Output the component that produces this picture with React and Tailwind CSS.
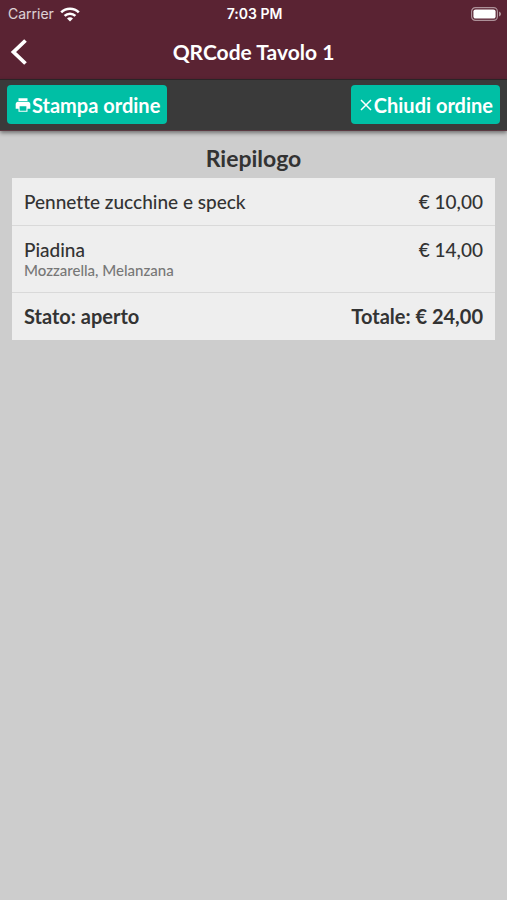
import { IoMdPrint } from 'react-icons/io'

const items = [
  { name: 'Pennette zucchine e speck', price: '€ 10,00' },
  { name: 'Piadina', extras: 'Mozzarella, Melanzana', price: '€ 14,00' },
]

function StatusBar(){
  return (
    <div className="grid h-7 grid-cols-3 items-center pr-1.5 pl-2 font-['Inter',sans-serif] text-sm">
      <div className="flex items-center gap-1.5 text-white/80">
        <span>Carrier</span>
        <svg width="20" height="15" viewBox="0 0 20 15" fill="none" stroke="white" strokeWidth="2.6" aria-hidden="true">
          <path d="M1.2 5.4a12.5 12.5 0 0 1 17.6 0"/>
          <path d="M4.6 8.9a7.7 7.7 0 0 1 10.8 0"/>
          <path d="M10 14.4 7 11.4a4.2 4.2 0 0 1 6 0z" fill="white" stroke="none"/>
        </svg>
      </div>
      <span className="text-center font-semibold">7:03 PM</span>
      <svg className="justify-self-end" width="30" height="14" viewBox="0 0 30 14" aria-hidden="true">
        <rect x=".6" y=".6" width="25.8" height="12.8" rx="3.8" fill="none" stroke="white" strokeOpacity=".5" strokeWidth="1.2"/>
        <rect x="2.4" y="2.4" width="22.2" height="9.2" rx="2.2" fill="white"/>
        <path d="M28 4.6c1.2.5 2 1.4 2 2.4s-.8 1.9-2 2.4z" fill="white" fillOpacity=".5"/>
      </svg>
    </div>
  )
}

function ActionButton({ icon, children }){
  return (
    <button className="flex h-[39px] items-center rounded bg-[#00bfa5] px-[7px] text-xl font-bold text-white">
      {icon}{children}
    </button>
  )
}

export default function App(){
  return (
    <div className="min-h-screen bg-[#cdcdcd] font-['Lato',sans-serif] text-[#333] [font-variant-ligatures:none]">
      <header className="bg-[#5a2333] text-white">
        <StatusBar/>
        <div className="grid h-[51px] grid-cols-[40px_1fr_40px] items-center">
          <button aria-label="Indietro" className="pb-1 pl-[10px]">
            <svg width="18" height="26" viewBox="0 0 18 26" fill="none" stroke="white" strokeWidth="3.8">
              <path d="M15.5 1.5 3.5 13l12 11.5"/>
            </svg>
          </button>
          <h1 className="pb-1 text-center text-[21px] leading-7 font-bold">QRCode Tavolo 1</h1>
        </div>
      </header>
      <div className="flex items-center justify-between border-t border-b border-t-[#2b2427] border-b-[#5a3a42] bg-[#3a3a3a] px-[7px] pt-[5px] pb-1.5 shadow-[0_2px_4px_rgba(0,0,0,0.45)]">
        <ActionButton icon={<IoMdPrint size={18}/>}>Stampa ordine</ActionButton>
        <ActionButton icon={
          <svg width="16" height="14" viewBox="0 0 16 14" fill="none" stroke="white" strokeWidth="1.5">
            <path d="M3 2l10 10M13 2 3 12"/>
          </svg>
        }>Chiudi ordine</ActionButton>
      </div>
      <main className="px-3 pt-3">
        <h2 className="pb-1 text-center text-[23px] leading-[31px] font-bold">Riepilogo</h2>
        <table className="w-full border-collapse bg-[#eee] text-[19px] leading-[23px]">
          <tbody>
            {items.map(item => (
              <tr key={item.name} className="border-b border-[#d9d9d9] align-top font-medium">
                <td className="px-3 py-3">
                  {item.name}
                  {item.extras && <div className="text-[15px] leading-[19px] text-[#777]">{item.extras}</div>}
                </td>
                <td className="px-3 py-3 text-right whitespace-nowrap">{item.price}</td>
              </tr>
            ))}
            <tr className="text-xl leading-[23px] font-bold">
              <td className="px-3 py-3">Stato: aperto</td>
              <td className="px-3 py-3 text-right whitespace-nowrap">Totale: € 24,00</td>
            </tr>
          </tbody>
        </table>
      </main>
    </div>
  )
}
